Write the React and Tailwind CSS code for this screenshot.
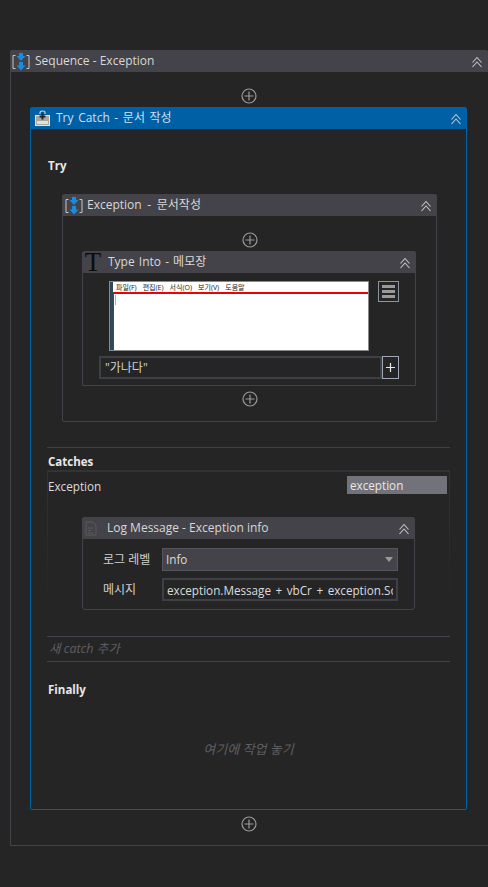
const FONT = "font-['Open_Sans','Noto_Sans_CJK_KR',sans-serif]";

function Chevrons({ color = "#c4c4c8" }) {
  return (
    <svg width="12" height="12" viewBox="0 0 12 12" fill="none" stroke={color} strokeWidth="1.1" className="block">
      <path d="M1.5 6.5 6 1.5l4.5 5" />
      <path d="M1.5 11 6 6l4.5 5" />
    </svg>
  );
}

function AddCircle() {
  return (
    <svg width="16" height="16" viewBox="0 0 16 16" fill="none" stroke="#9a9a9a" strokeWidth="1.2" className="block">
      <circle cx="8" cy="8" r="7" />
      <path d="M3.500 8h9M8 3.500v9" />
    </svg>
  );
}

function SequenceIcon() {
  return (
    <svg width="18" height="18" viewBox="0 0 18 18" fill="none" className="block">
      <path d="M3.500 2.500H1v13h2.500M14.500 2.500H17v13h-2.500" stroke="#c8c8c8" strokeWidth="1" />
      <path d="M7 0h4v3h2.500L9 8 4.500 3H7z" fill="#1b8be0" />
      <path d="M7 9h4v3.500h2.500l-4.500 5-4.500-5H7z" fill="#1b8be0" />
    </svg>
  );
}

function TryCatchIcon() {
  return (
    <svg width="17" height="17" viewBox="0 0 17 17" className="block">
      <path d="M6 4V2.500C6 1.500 7 1 8.500 1S11 1.500 11 2.500V4" fill="none" stroke="#cfcfcf" strokeWidth="1.200" />
      <rect x="1.500" y="5.500" width="14" height="10" fill="#a9a79e" stroke="#e6e6e2" strokeWidth="1" />
      <rect x="3" y="11" width="11" height="3" fill="#e2e0d8" />
      <path d="M8.500 3.500v6M5.500 6.500h6" stroke="#222222" strokeWidth="2" />
    </svg>
  );
}

function LogIcon() {
  return (
    <svg width="12" height="15" viewBox="0 0 12 15" fill="none" stroke="#5a5a5e" strokeWidth="1" className="block">
      <path d="M1 1h7l3 3v10H1z" />
      <path d="M3 7h5M3 9.500h3M3 12h5" />
    </svg>
  );
}

function Card({ icon, title, chevronRight = "pr-[4px]", headerClass = "bg-[#434349]", titleClass = "", className = "", children }) {
  return (
    <div className={`rounded-t-[2px] border ${className}`}>
      <div className={`flex h-[21px] items-center justify-between ${headerClass}`}>
        <div className="flex min-w-0 items-center">
          {icon}
          <span className={`whitespace-nowrap pb-[2px] text-[12px] leading-none text-[#d8d8d8] ${titleClass}`}>{title}</span>
        </div>
        <div className={chevronRight}>
          <Chevrons />
        </div>
      </div>
      {children}
    </div>
  );
}

function NotepadShot() {
  return (
    <div className="flex h-[70px] w-[260px] shrink-0 border border-[#8a8a8a] bg-white">
      <div className="w-[3px] bg-[#33475c]" />
      <div className="flex min-w-0 flex-1 flex-col">
        <div className="flex h-[10px] items-center gap-[6px] whitespace-nowrap pl-[3px] text-[7px] leading-none text-[#222]">
          <span>파일(F)</span>
          <span>편집(E)</span>
          <span>서식(O)</span>
          <span>보기(V)</span>
          <span>도움말</span>
        </div>
        <div className="flex-1 border-l border-t-2 border-[#f00000]">
          <div className="ml-[1px] mt-[1px] h-[10px] w-px bg-[#b0b0b0]" />
        </div>
      </div>
    </div>
  );
}

function TypeInto() {
  return (
    <Card
      className="ml-[19px] mr-[20px] h-[135px] border-[#434349]"
      title="Type Into - 메모장"
      titleClass="[word-spacing:1px]"
      icon={
        <span className="ml-[1px] mr-[6px] w-[18px] text-center font-['Liberation_Serif',serif] text-[27px] leading-[21px] text-[#0c0c0c]">
          T
        </span>
      }
    >
      <div className="px-[16px] pt-[8px]">
        <div className="flex items-start pl-[10px]">
          <NotepadShot />
          <div className="ml-[9px] flex h-[21px] w-[21px] flex-col items-center justify-center gap-[2px] border border-[#8d94a0]">
            <div className="h-[3px] w-[13px] bg-[#9a9a9a]" />
            <div className="h-[3px] w-[13px] bg-[#9a9a9a]" />
            <div className="h-[3px] w-[13px] bg-[#9a9a9a]" />
          </div>
        </div>
        <div className="mt-[5px] flex h-[23px]">
          <div className="flex w-[283px] items-center border-2 border-[#3f3f46] pl-[4px] pt-[1px] text-[12px] text-[#d0d0d0]">
            "가나다"
          </div>
          <div className="flex w-[17px] items-center justify-center border border-[#a0a8b4]">
            <svg width="9" height="9" viewBox="0 0 9 9" stroke="#e8e8e8" strokeWidth="1.200" className="block">
              <path d="M0 4.500h9M4.500 0v9" />
            </svg>
          </div>
        </div>
      </div>
    </Card>
  );
}

function ExceptionSeq() {
  return (
    <Card
      className="ml-[31px] mr-[29px] mt-[20px] h-[228px] rounded-b-[2px] border-[#434349]"
      title="Exception - 문서작성"
      titleClass="[word-spacing:2.500px]"
      icon={
        <span className="ml-[2px] mr-[4px]">
          <SequenceIcon />
        </span>
      }
    >
      <div className="flex justify-center pb-[3px] pt-[16px]">
        <AddCircle />
      </div>
      <TypeInto />
      <div className="flex justify-center pt-[5px]">
        <AddCircle />
      </div>
    </Card>
  );
}

function LogMessage() {
  return (
    <Card
      className="mx-[34px] h-[93px] rounded-b-[3px] border-[#434349]"
      title="Log Message - Exception info"
      titleClass="text-[11.800px]"
      icon={
        <span className="ml-[2px] mr-[10px] flex w-[12px]">
          <LogIcon />
        </span>
      }
    >
      <div className="flex flex-col gap-[7px] pt-[9px]">
        <div className="flex items-center">
          <span className="w-[79px] pl-[20px] text-[12px] text-[#d0d0d0]">로그 레벨</span>
          <div className="flex h-[23px] w-[236px] items-center justify-between border border-[#55555c] bg-[#434349] pl-[3px] pr-[4px] text-[11.700px] text-[#dcdcdc]">
            <span className="pt-[1px]">Info</span>
            <svg width="8" height="5" viewBox="0 0 8 5" fill="#9a9a9a" className="block">
              <path d="M0 0h8L4 5z" />
            </svg>
          </div>
        </div>
        <div className="flex items-center">
          <span className="w-[79px] pl-[20px] pt-[1px] text-[12px] text-[#d0d0d0]">메시지</span>
          <div className="h-[23px] w-[236px] border-2 border-[#3f3f46] pl-[3px] pr-[3px]">
            <div className="overflow-hidden whitespace-nowrap pt-[2px] text-[11.700px] leading-[17px] text-[#dcdcdc] [word-spacing:1.500px]">
              exception.Message + vbCr + exception.Source
            </div>
          </div>
        </div>
      </div>
    </Card>
  );
}

export default function App() {
  return (
    <div className={`${FONT} h-[887px] w-[488px] overflow-hidden bg-[#252526] pl-[10px] pt-[50px]`}>
      <Card
        className="h-[796px] w-[478px] border-[#434349] border-r-0"
        title="Sequence - Exception"
        chevronRight="pr-[5px]"
        icon={
          <span className="ml-[1px] mr-[5px]">
            <SequenceIcon />
          </span>
        }
      >
        <div className="flex justify-center pb-[3px] pr-[2px] pt-[16px]">
          <AddCircle />
        </div>
        <Card
          className="ml-[19px] h-[703px] w-[437px] rounded-b-[2px] border-[#0063a8]"
          headerClass="bg-[#0060a6]"
          titleClass="[word-spacing:1.500px]"
          title={<span className="text-[#cfdfee]">Try Catch - 문서 작성</span>}
          icon={
            <span className="ml-[3px] mr-[5px]">
              <TryCatchIcon />
            </span>
          }
        >
          <div className="flex flex-col">
            <div className="pl-[17px] pt-[28px] text-[11.500px] font-bold leading-[17px] text-[#e8e8e8]">Try</div>
            <ExceptionSeq />

            <div className="mx-[16px] mt-[25px] border-t border-[#3f3f46] pt-[6px]">
              <div className="pl-[1px] text-[11.500px] font-bold leading-[16px] text-[#e8e8e8]">Catches</div>
              <div className="h-[166px] border-x border-t-2 [border-image:linear-gradient(#333336,#252526_80%)_1]">
                <div className="flex h-[29px] items-start justify-between pr-[2px] pt-[4px]">
                  <span className="text-[11.700px] leading-[20px] text-[#dcdcdc]">Exception</span>
                  <div className="flex h-[18px] w-[100px] items-center bg-[#72727a] pl-[3px] pt-[2px] text-[11.700px] text-[#e8e8e8]">
                    exception
                  </div>
                </div>
                <div className="pt-[16px]">
                  <LogMessage />
                </div>
              </div>
              <div className="flex h-[26px] items-center border-y border-[#434349] pl-[2px] text-[12.500px] italic text-[#5f5f63]">
                새 catch 추가
              </div>
            </div>

            <div className="pl-[17px] pt-[19px] text-[11.500px] font-bold leading-[17px] text-[#e8e8e8]">Finally</div>
            <div className="pt-[43px] text-center text-[13px] italic leading-[17px] text-[#5f5f63]">
              여기에 작업 놓기
            </div>
          </div>
        </Card>
        <div className="flex justify-center pr-[2px] pt-[6px]">
          <AddCircle />
        </div>
      </Card>
    </div>
  );
}
